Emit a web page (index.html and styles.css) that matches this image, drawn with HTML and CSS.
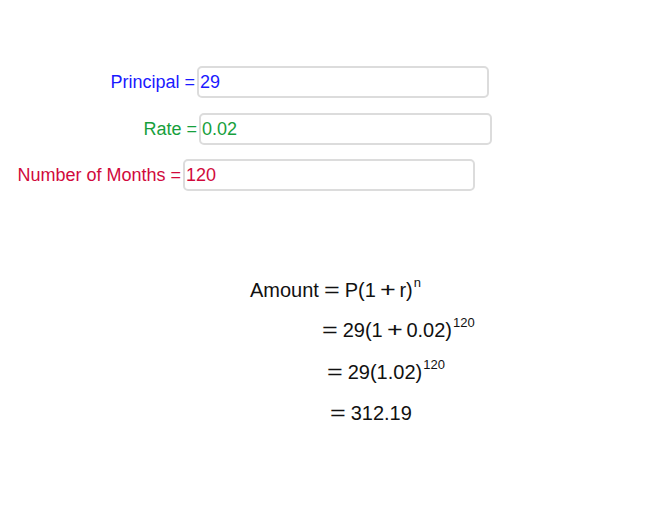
FILE: index.html
```html
<!DOCTYPE html>
<html>
<head>
<meta charset="utf-8">
<link rel="stylesheet" href="styles.css">
</head>
<body>
<div class="applet">
  <div class="field field-principal">
    <label class="label">Principal =</label>
    <div class="input">29</div>
  </div>
  <div class="field field-rate">
    <label class="label">Rate =</label>
    <div class="input">0.02</div>
  </div>
  <div class="field field-months">
    <label class="label">Number of Months =</label>
    <div class="input">120</div>
  </div>

  <div class="math">
    <div class="mline l1">Amount<span class="op eq">=</span>P(1<span class="op">+</span>r)<sup>n</sup></div>
    <div class="mline l2"><span class="op eq lead">=</span>29(1<span class="op">+</span>0.02)<sup>120</sup></div>
    <div class="mline l3"><span class="op eq lead">=</span>29(1.02)<sup>120</sup></div>
    <div class="mline l4"><span class="op eq lead">=</span>312.19</div>
  </div>
</div>
</body>
</html>
```

FILE: styles.css
```css
html, body {
  margin: 0;
  padding: 0;
  background: #ffffff;
}

.applet {
  width: 666px;
  height: 508px;
  padding-top: 66px;
  box-sizing: border-box;
  font-family: "Liberation Sans", Arial, sans-serif;
  overflow: hidden;
}

.field {
  display: flex;
  align-items: center;
  height: 32px;
  font-size: 18px;
}

.label {
  text-align: right;
  margin-right: 2px;
  white-space: nowrap;
}

.input {
  box-sizing: border-box;
  height: 32px;
  border: 2px solid #dcdcdc;
  border-radius: 5px;
  padding-left: 1px;
  line-height: 28px;
  background: #fff;
}

.field-principal { color: #1a1aff; }
.field-principal .label { width: 195px; }
.field-principal .input { width: 292px; }

.field-rate { color: #16a03c; margin-top: 15px; }
.field-rate .label { width: 197px; }
.field-rate .input { width: 293px; }

.field-months { color: #d10a3c; margin-top: 14px; }
.field-months .label { width: 181px; }
.field-months .input { width: 292px; }

.math {
  margin-top: 87px;
  font-size: 20px;
  color: #111;
  line-height: 24px;
}

.mline {
  white-space: nowrap;
  height: 24px;
}

.l1 { padding-left: 250px; margin-top: 0; }
.l2 { padding-left: 322px; margin-top: 16px; }
.l3 { padding-left: 327px; margin-top: 18px; }
.l4 { padding-left: 330px; margin-top: 17px; }

.op {
  display: inline-block;
  transform: scaleX(1.35);
  margin: 0 6px;
}

.op.eq {
  margin: 0 7px;
}

.op.lead {
  margin-left: 2px;
}

sup {
  font-size: 13px;
  vertical-align: 0;
  position: relative;
  top: -10px;
  margin-left: 1px;
}
```
